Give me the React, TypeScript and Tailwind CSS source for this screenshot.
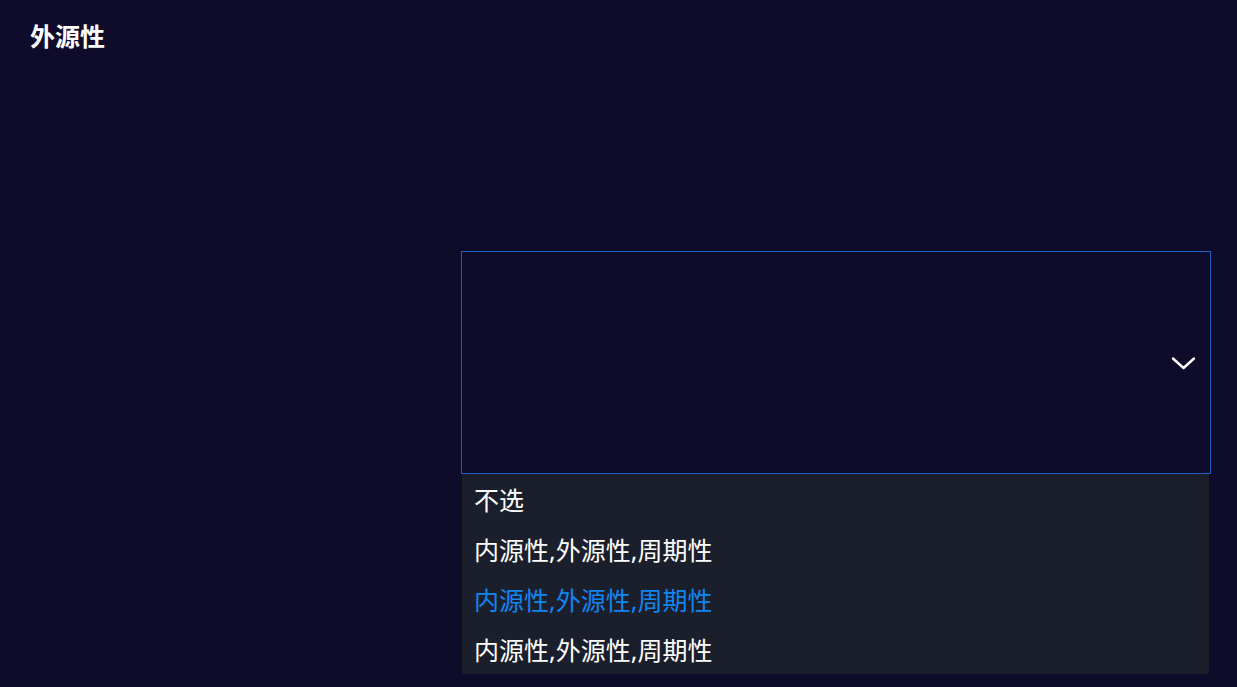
import { useState } from "react";

const options = ["不选", "内源性,外源性,周期性", "内源性,外源性,周期性", "内源性,外源性,周期性"];

export default function App() {
  const [selected, setSelected] = useState(2);

  return (
    <div
      className="min-h-[687px] w-full bg-[#0f0b2b] text-white"
      style={{ fontFamily: '"Noto Sans", "Noto Sans CJK SC", sans-serif' }}
    >
      {/* Title */}
      <div className="px-[30px] pt-[19px]">
        <h2 className="text-[25px] leading-[34px] font-bold">外源性</h2>
      </div>

      {/* Select */}
      <div className="flex justify-end pr-[26px] pt-[198px]">
        <div className="relative w-[750px]">
          <div className="flex h-[223px] items-center justify-end border border-[#1b63bf] bg-[#0f0b2b] pr-[14px]">
            <svg width="25" height="16" viewBox="0 0 25 16" fill="none" className="mt-[1px]">
              <path d="M2 3.5 L12.5 13 L23 3.5" stroke="white" strokeWidth="2.4" strokeLinecap="round" strokeLinejoin="round" />
            </svg>
          </div>

          {/* Options */}
          <ul className="absolute left-[1px] top-[223px] w-[747px] rounded-b-[3px] bg-[#1b1f2c]">
            {options.map((opt, i) => (
              <li
                key={i}
                onClick={() => setSelected(i)}
                className={
                  "flex h-[50px] cursor-pointer items-center pl-[12px] pt-[3px] text-[25px] " +
                  (i === selected ? "text-[#0d86f2]" : "text-white")
                }
              >
                {opt}
              </li>
            ))}
          </ul>
        </div>
      </div>
    </div>
  );
}
